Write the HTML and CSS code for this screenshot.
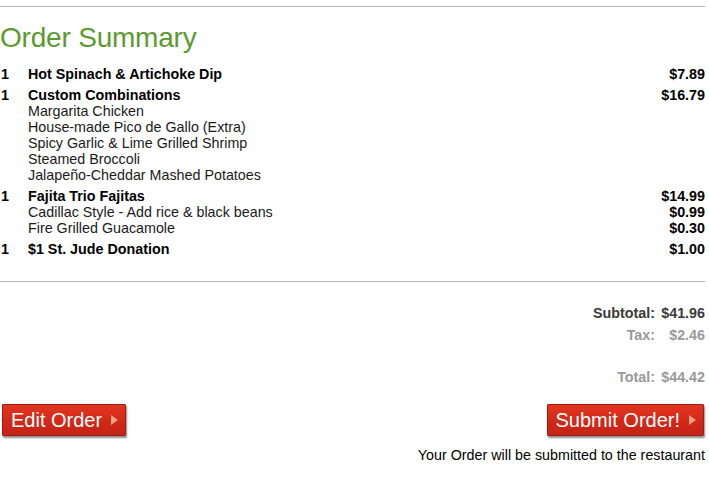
FILE: index.html
```html
<!DOCTYPE html>
<html>
<head>
<meta charset="utf-8">
<link rel="stylesheet" href="styles.css">
</head>
<body>
<div class="page">
  <hr class="rule top-rule">
  <h1 class="title">Order Summary</h1>

  <div class="items">
    <div class="item">
      <div class="line main"><span class="qty">1</span><span class="name">Hot Spinach &amp; Artichoke Dip</span><span class="price">$7.89</span></div>
    </div>
    <div class="item">
      <div class="line main"><span class="qty">1</span><span class="name">Custom Combinations</span><span class="price">$16.79</span></div>
      <div class="line sub"><span class="qty"></span><span class="name">Margarita Chicken</span><span class="price"></span></div>
      <div class="line sub"><span class="qty"></span><span class="name">House-made Pico de Gallo (Extra)</span><span class="price"></span></div>
      <div class="line sub"><span class="qty"></span><span class="name">Spicy Garlic &amp; Lime Grilled Shrimp</span><span class="price"></span></div>
      <div class="line sub"><span class="qty"></span><span class="name">Steamed Broccoli</span><span class="price"></span></div>
      <div class="line sub"><span class="qty"></span><span class="name">Jalapeño-Cheddar Mashed Potatoes</span><span class="price"></span></div>
    </div>
    <div class="item">
      <div class="line main"><span class="qty">1</span><span class="name">Fajita Trio Fajitas</span><span class="price">$14.99</span></div>
      <div class="line sub"><span class="qty"></span><span class="name">Cadillac Style - Add rice &amp; black beans</span><span class="price">$0.99</span></div>
      <div class="line sub"><span class="qty"></span><span class="name">Fire Grilled Guacamole</span><span class="price">$0.30</span></div>
    </div>
    <div class="item">
      <div class="line main"><span class="qty">1</span><span class="name">$1 St. Jude Donation</span><span class="price">$1.00</span></div>
    </div>
  </div>

  <hr class="rule mid-rule">

  <div class="totals">
    <div class="trow subtotal"><span class="tlabel">Subtotal:</span><span class="tval">$41.96</span></div>
    <div class="trow tax"><span class="tlabel">Tax:</span><span class="tval">$2.46</span></div>
    <div class="trow total"><span class="tlabel">Total:</span><span class="tval">$44.42</span></div>
  </div>

  <div class="actions">
    <button class="btn">Edit Order<span class="arrow"></span></button>
    <button class="btn">Submit Order!<span class="arrow"></span></button>
  </div>

  <p class="note">Your Order will be submitted to the restaurant</p>
</div>
</body>
</html>
```

FILE: styles.css
```css
html, body {
  margin: 0;
  padding: 0;
  background: #fff;
}

body {
  font-family: "Liberation Sans", Arial, sans-serif;
  font-size: 14.3px;
  color: #000;
}

.page {
  width: 705px;
  padding-top: 6px;
}

.rule {
  border: 0;
  border-top: 1px solid #b4b4b4;
  margin: 0;
  height: 0;
}

.title {
  margin: 15px 0 0 0;
  font-family: "Liberation Sans", Arial, sans-serif;
  font-weight: normal;
  font-size: 28px;
  line-height: 32px;
  color: #5c9a30;
  letter-spacing: -0.2px;
}

.items {
  margin-top: 12px;
  display: flex;
  flex-direction: column;
  gap: 5px;
}

.line {
  display: grid;
  grid-template-columns: 28px 1fr auto;
  line-height: 16px;
}

.qty {
  padding-left: 1px;
  font-weight: bold;
}

.main .name {
  font-weight: bold;
}

.sub .name {
  color: #1a1a1a;
}

.price {
  font-weight: bold;
  text-align: right;
}

.mid-rule {
  margin-top: 24px;
}

.totals {
  margin-top: 20px;
  display: flex;
  flex-direction: column;
  align-items: flex-end;
}

.trow {
  display: grid;
  grid-template-columns: auto 47px;
  column-gap: 3px;
  justify-items: end;
  line-height: 22px;
  font-weight: bold;
  color: #999;
}

.subtotal {
  color: #3a3a3a;
}

.total {
  margin-top: 20px;
}

.actions {
  margin-top: 16px;
  display: flex;
  justify-content: space-between;
  padding: 0 1px 0 2px;
}

.btn {
  display: flex;
  align-items: center;
  height: 32px;
  padding: 0 7px 0 8px;
  border: 1px solid #9f1c13;
  border-radius: 1px;
  background: linear-gradient(#e2351f, #cf2818 60%, #c42417);
  box-shadow: 1px 2px 2px rgba(0, 0, 0, 0.45);
  color: #fff;
  font-family: "Liberation Sans", Arial, sans-serif;
  font-size: 20px;
  line-height: 1;
  cursor: pointer;
}

.arrow {
  display: inline-block;
  width: 0;
  height: 0;
  margin-left: 9px;
  border-top: 5px solid transparent;
  border-bottom: 5px solid transparent;
  border-left: 7px solid #f5a07e;
}

.note {
  margin: 11px 0 0 0;
  text-align: right;
  line-height: 16px;
}
```
